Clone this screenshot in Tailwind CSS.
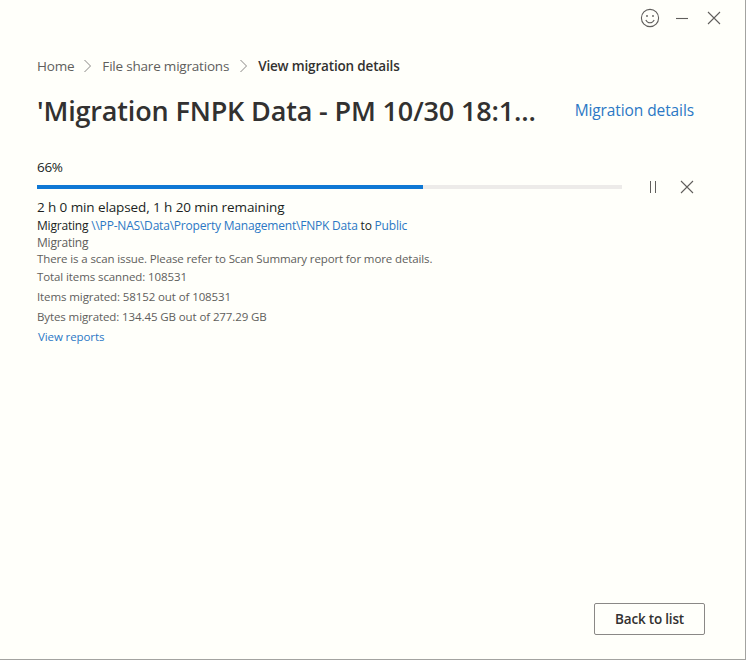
<!DOCTYPE html>
<html>
<head>
<script src="https://cdn.jsdelivr.net/npm/@tailwindcss/browser@4"></script>
</head>
<body class="m-0">
<div class="w-[746px] h-[660px] bg-[#fffffa] border-r border-b border-[#a3a3a0] flex flex-col font-['Open_Sans','Noto_Sans',sans-serif] overflow-hidden">
  <div class="h-[36px] flex items-center justify-end shrink-0 pr-[24px] gap-[15px] text-[#605e5c]">
    <svg class="w-[20px] h-[20px]" viewBox="0 0 20 20" fill="none" stroke="#605e5c" stroke-width="1.1"><circle cx="10" cy="10" r="8.6"/><circle cx="7" cy="8" r="0.9" fill="#605e5c" stroke="none"/><circle cx="13" cy="8" r="0.9" fill="#605e5c" stroke="none"/><path d="M5.8 12c1 1.9 2.5 2.8 4.2 2.8s3.2-.9 4.2-2.8"/></svg>
    <svg class="w-[14px] h-[14px]" viewBox="0 0 14 14" fill="none" stroke="#605e5c" stroke-width="1.1"><path d="M1 7.5h12"/></svg>
    <svg class="w-[14px] h-[14px] ml-[3px]" viewBox="0 0 14 14" fill="none" stroke="#605e5c" stroke-width="1.1"><path d="M1 1l12 12M13 1L1 13"/></svg>
  </div>
  <div class="flex-1 flex flex-col pl-[37px] pr-[51px] pt-[20px] pb-[24px] min-h-0">
    <nav class="flex items-center h-[20px] text-[13.5px] tracking-[-0.2px] text-[#605e5c]">
      <span>Home</span>
      <svg class="w-[10px] h-[14px] mx-[9px]" viewBox="0 0 10 14" fill="none" stroke="#8a8886" stroke-width="1"><path d="M1.5 1l6 6-6 6"/></svg>
      <span>File share migrations</span>
      <svg class="w-[10px] h-[14px] mx-[9.5px]" viewBox="0 0 10 14" fill="none" stroke="#8a8886" stroke-width="1"><path d="M1.5 1l6 6-6 6"/></svg>
      <span class="font-semibold text-[#323130] tracking-[-0.17px]">View migration details</span>
    </nav>
    <div class="flex items-center justify-between h-[44px] mt-[13px]">
      <h1 class="text-[27px] font-semibold leading-[44px] text-[#323130] tracking-[-0.15px]">'Migration FNPK Data - PM 10/30 18:1...</h1>
      <a class="text-[15.5px] text-[#2b78c5] tracking-[-0.1px]">Migration details</a>
    </div>
    <div class="text-[13.5px] tracking-[-0.3px] text-[#201f1e] mt-[24px] h-[20px] leading-[20px]">66%</div>
    <div class="flex items-center mt-[8px] h-[4px]">
      <div class="w-[585px] h-[4px] bg-[#edebe9]"><div class="h-full bg-[#0f78d4]" style="width:66%"></div></div>
      <svg class="w-[10px] h-[12px] ml-[26px]" viewBox="0 0 10 12" fill="none" stroke="#605e5c" stroke-width="1"><path d="M2.5 0v12M7.5 0v12"/></svg>
      <svg class="w-[14px] h-[14px] ml-[22px]" viewBox="0 0 14 14" fill="none" stroke="#605e5c" stroke-width="1.1"><path d="M1 1l12 12M13 1L1 13"/></svg>
    </div>
    <div class="mt-[8px] text-[13.5px] tracking-[-0.1px] leading-[20px] text-[#201f1e]">2 h 0 min elapsed, 1 h 20 min remaining</div>
    <div class="text-[12px] tracking-[-0.2px] leading-[16px] text-[#201f1e] mt-[1px]">Migrating <a class="text-[#2b78c5]">\\PP-NAS\Data\Property Management\FNPK Data</a> to <a class="text-[#2b78c5]">Public</a></div>
    <div class="text-[12px] tracking-[-0.2px] leading-[16px] text-[#605e5c] mt-[1px]">Migrating</div>
    <div class="text-[11.5px] tracking-[-0.12px] leading-[16px] text-[#605e5c]">There is a scan issue. Please refer to Scan Summary report for more details.</div>
    <div class="text-[11.5px] tracking-[-0.1px] leading-[20px] text-[#605e5c]">Total items scanned: 108531</div>
    <div class="text-[11.5px] tracking-[-0.1px] leading-[20px] text-[#605e5c]">Items migrated: 58152 out of 108531</div>
    <div class="text-[11.5px] tracking-[-0.1px] leading-[20px] text-[#605e5c]">Bytes migrated: 134.45 GB out of 277.29 GB</div>
    <a class="text-[11.5px] tracking-[-0.1px] leading-[20px] text-[#2b78c5] pl-[1px]">View reports</a>
    <div class="flex-1"></div>
    <div class="flex justify-end -mr-[11px]">
      <button class="w-[111px] h-[32px] border border-[#8a8886] rounded-[2px] text-[13.5px] font-semibold text-[#323130] tracking-[-0.2px]">Back to list</button>
    </div>
  </div>
</div>
</body>
</html>
